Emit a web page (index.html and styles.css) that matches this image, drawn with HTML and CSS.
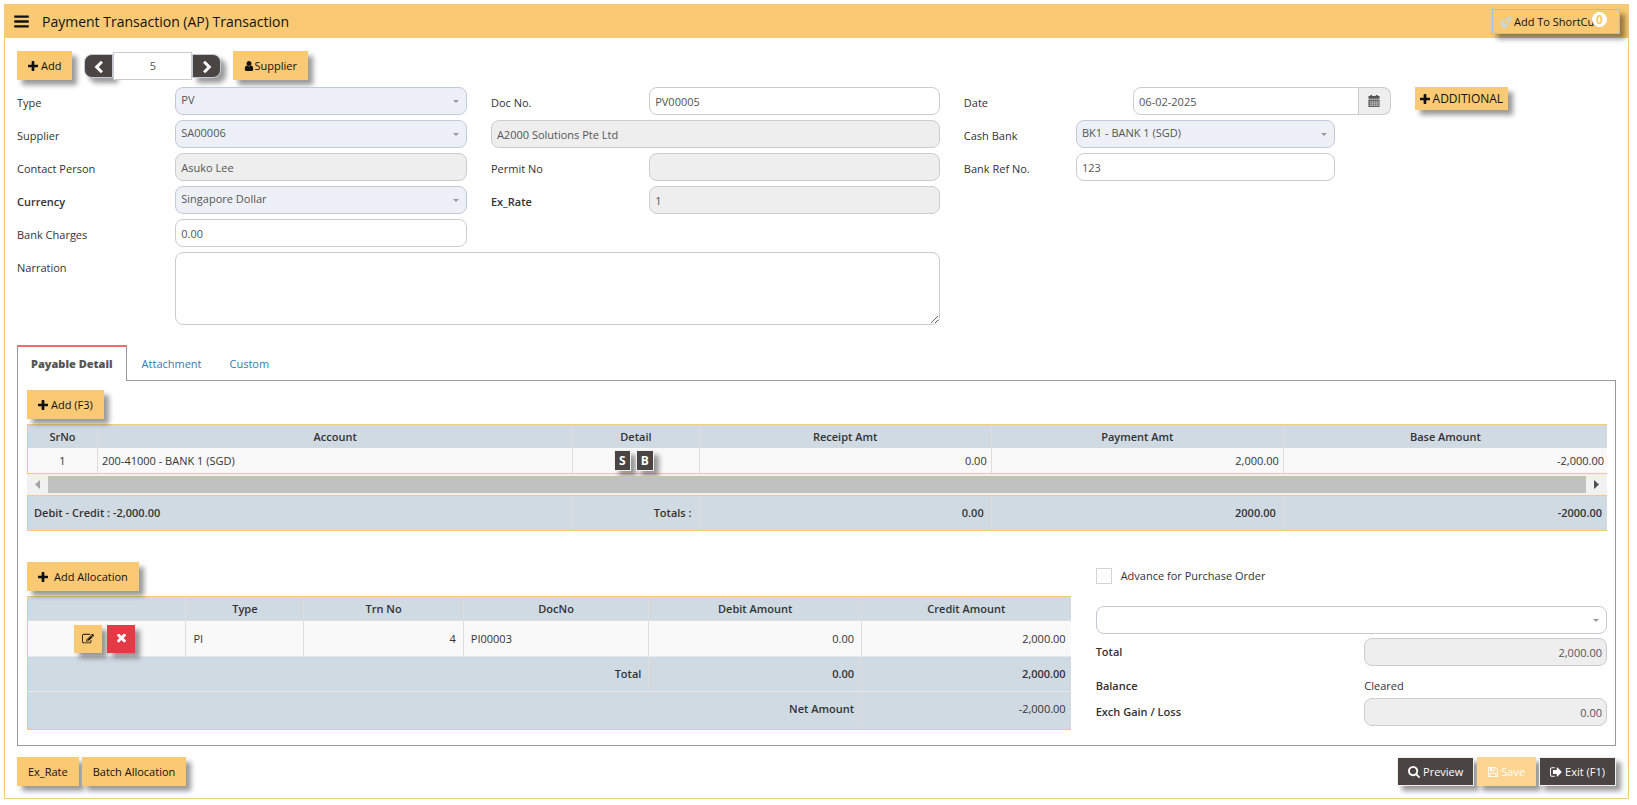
FILE: index.html
```html
<!DOCTYPE html>
<html lang="en">
<head>
  <meta charset="UTF-8">
  <title>Payment Transaction (AP) Transaction</title>
  <link rel="stylesheet" href="styles.css">
</head>
<body>

  <svg class="icon-defs" aria-hidden="true">
    <symbol id="i-bars" viewBox="0 0 1792 1792"><path d="M1664 1344v128q0 26-19 45t-45 19h-1408q-26 0-45-19t-19-45v-128q0-26 19-45t45-19h1408q26 0 45 19t19 45zm0-512v128q0 26-19 45t-45 19h-1408q-26 0-45-19t-19-45v-128q0-26 19-45t45-19h1408q26 0 45 19t19 45zm0-512v128q0 26-19 45t-45 19h-1408q-26 0-45-19t-19-45v-128q0-26 19-45t45-19h1408q26 0 45 19t19 45z"/></symbol>
    <symbol id="i-plus" viewBox="192 128 1408 1408"><path d="M1600 736v192q0 40-28 68t-68 28h-416v416q0 40-28 68t-68 28h-192q-40 0-68-28t-28-68v-416h-416q-40 0-68-28t-28-68v-192q0-40 28-68t68-28h416v-416q0-40 28-68t68-28h192q40 0 68 28t28 68v416h416q40 0 68 28t28 68z"/></symbol>
    <symbol id="i-user" viewBox="256 128 1280 1536"><path d="M1536 1399q0 109-62.5 187t-150.5 78h-854q-88 0-150.5-78t-62.5-187q0-85 8.5-160.5t31.5-152 58.5-131 94-89 134.5-34.5q131 128 313 128t313-128q76 0 134.5 34.5t94 89 58.5 131 31.5 152 8.5 160.5zm-256-887q0 159-112.5 271.5t-271.5 112.5-271.5-112.5-112.5-271.5 112.5-271.5 271.5-112.5 271.5 112.5 112.5 271.5z"/></symbol>
    <symbol id="i-rocket" viewBox="0 0 24 24"><path d="M22 2c-6 0-10 2.500-13 7H5l-3.500 5H7l3 3v5.500l5-3.500v-4c4.500-3 7-7 7-13zM6 16.500c-2 1-3 3-3 5.500 2.500 0 4.500-1 5.500-3z" fill="none" stroke="currentColor" stroke-width="2.400"/><circle cx="16" cy="8" r="2"/></symbol>
    <symbol id="i-edit" viewBox="0 128 1792 1536"><path d="M888 1184l116-116-152-152-116 116v56h96v96h56zm440-720q-16-16-33 1l-350 350q-17 17-1 33t33-1l350-350q17-17 1-33zm80 594v190q0 119-84.5 203.5t-203.5 84.5h-832q-119 0-203.5-84.5t-84.5-203.5v-832q0-119 84.5-203.5t203.5-84.5h832q63 0 117 25 15 7 18 23 3 17-9 29l-49 49q-14 14-32 8-23-6-45-6h-832q-66 0-113 47t-47 113v832q0 66 47 113t113 47h832q66 0 113-47t47-113v-126q0-13 9-22l64-64q15-15 35-7t20 29zm-96-738l288 288-672 672h-288v-288zm444 132l-92 92-288-288 92-92q28-28 68-28t68 28l152 152q28 28 28 68t-28 68z"/></symbol>
    <symbol id="i-times" viewBox="302 434 1188 1188"><path d="M1490 1322q0 40-28 68l-136 136q-28 28-68 28t-68-28l-294-294-294 294q-28 28-68 28t-68-28l-136-136q-28-28-28-68t28-68l294-294-294-294q-28-28-28-68t28-68l136-136q28-28 68-28t68 28l294 294 294-294q28-28 68-28t68 28l136 136q28 28 28 68t-28 68l-294 294 294 294q28 28 28 68z"/></symbol>
    <symbol id="i-search" viewBox="64 128 1664 1664"><path d="M1216 832q0-185-131.5-316.5t-316.5-131.5-316.5 131.5-131.5 316.5 131.5 316.5 316.5 131.5 316.5-131.5 131.5-316.5zm512 832q0 52-38 90t-90 38q-54 0-90-38l-343-342q-179 124-399 124-143 0-273.5-55.5t-225-150-150-225-55.5-273.5 55.5-273.5 150-225 225-150 273.5-55.5 273.5 55.5 225 150 150 225 55.5 273.5q0 220-124 399l343 343q37 37 37 90z"/></symbol>
    <symbol id="i-save" viewBox="128 128 1536 1536"><path d="M512 1536h768v-384h-768v384zm896 0h128v-896q0-14-10-38.5t-20-34.5l-281-281q-10-10-34-20t-39-10v416q0 40-28 68t-68 28h-576q-40 0-68-28t-28-68v-416h-128v1280h128v-416q0-40 28-68t68-28h832q40 0 68 28t28 68v416zm-384-928v-320q0-13-9.5-22.5t-22.5-9.5h-192q-13 0-22.5 9.5t-9.5 22.5v320q0 13 9.5 22.5t22.5 9.5h192q13 0 22.5-9.5t9.5-22.5zm640 32v928q0 40-28 68t-68 28h-1344q-40 0-68-28t-28-68v-1344q0-40 28-68t68-28h928q40 0 88 20t76 48l280 280q28 28 48 76t20 88z"/></symbol>
    <symbol id="i-exit" viewBox="64 128 1600 1536"><path d="M704 1440q0 4 1 20t.5 26.5-3 23.5-10 19.5-20.5 6.5h-320q-119 0-203.5-84.5t-84.5-203.5v-704q0-119 84.5-203.5t203.5-84.5h320q13 0 22.5 9.5t9.5 22.5q0 4 1 20t.5 26.5-3 23.5-10 19.5-20.5 6.5h-320q-66 0-113 47t-47 113v704q0 66 47 113t113 47h312l11.5 1 11.5 3 8 5.5 7 9 2 13.5zm928-544q0 26-19 45l-544 544q-19 19-45 19t-45-19-19-45v-288h-448q-26 0-45-19t-19-45v-384q0-26 19-45t45-19h448v-288q0-26 19-45t45-19 45 19l544 544q19 19 19 45z"/></symbol>
    <symbol id="i-left" viewBox="0 0 12 12"><path d="M8.500 1.500L4 6l4.500 4.500" fill="none" stroke="currentColor" stroke-width="2.600"/></symbol>
    <symbol id="i-right" viewBox="0 0 12 12"><path d="M3.500 1.500L8 6l-4.500 4.500" fill="none" stroke="currentColor" stroke-width="2.600"/></symbol>
    <symbol id="i-calendar" viewBox="0 0 12 13"><path d="M0 1h2V0h2v1h4V0h2v1h2v3H0zM0 5h12v8H0z"/><path d="M1 7.500h10M1 9.500h10M1 11.500h10M2.500 6v6M4.500 6v6M6.500 6v6M8.500 6v6M10.500 6v6" stroke="#eee" stroke-width=".5"/></symbol>
  </svg>

  <div class="panel">
    <header class="titlebar">
      <button type="button" class="menu-btn" aria-label="Menu"><svg class="icon-menu"><use href="#i-bars"/></svg></button>
      <h1>Payment Transaction (AP) Transaction</h1>
      <button type="button" class="btn shortcut"><svg class="icon"><use href="#i-rocket"/></svg> Add To ShortCut<span class="badge">0</span></button>
    </header>

    <div class="content">
      <div class="toolbar">
        <button type="button" class="btn"><svg class="icon-sm"><use href="#i-plus"/></svg> Add</button>
        <div class="pager">
          <button type="button" class="prev" aria-label="Previous"><svg class="icon-nav"><use href="#i-left"/></svg></button>
          <input type="text" value="5" aria-label="Record number">
          <button type="button" class="next" aria-label="Next"><svg class="icon-nav"><use href="#i-right"/></svg></button>
        </div>
        <button type="button" class="btn tight"><svg class="icon-sm"><use href="#i-user"/></svg>Supplier</button>
      </div>

      <form class="form">
        <label class="c1" for="type">Type</label>
        <div class="select c2"><select id="type"><option>PV</option></select></div>
        <label class="c3" for="docno">Doc No.</label>
        <input class="field c4" type="text" id="docno" value="PV00005">
        <label class="c5" for="date">Date</label>
        <div class="date-group">
          <input class="field" type="text" id="date" value="06-02-2025">
          <button type="button" aria-label="Pick date"><svg class="icon"><use href="#i-calendar"/></svg></button>
        </div>
        <button type="button" class="btn additional"><svg class="icon-sm"><use href="#i-plus"/></svg> ADDITIONAL</button>

        <label class="c1" for="supplier">Supplier</label>
        <div class="select c2"><select id="supplier"><option>SA00006</option></select></div>
        <input class="field c34" type="text" value="A2000 Solutions Pte Ltd" aria-label="Supplier name" readonly>
        <label class="c5" for="bank">Cash Bank</label>
        <div class="select c67"><select id="bank"><option>BK1 - BANK 1 (SGD)</option></select></div>

        <label class="c1" for="contact">Contact Person</label>
        <input class="field c2" type="text" id="contact" value="Asuko Lee" readonly>
        <label class="c3" for="permit">Permit No</label>
        <input class="field c4" type="text" id="permit" readonly>
        <label class="c5" for="bankref">Bank Ref No.</label>
        <input class="field c67" type="text" id="bankref" value="123">

        <label class="c1 bold" for="currency">Currency</label>
        <div class="select c2"><select id="currency"><option>Singapore Dollar</option></select></div>
        <label class="c3 bold" for="exrate">Ex_Rate</label>
        <input class="field c4" type="text" id="exrate" value="1" readonly>

        <label class="c1" for="charges">Bank Charges</label>
        <input class="field c2" type="text" id="charges" value="0.00">

        <label class="c1" for="narration">Narration</label>
        <textarea class="field narration" id="narration"></textarea>
      </form>

      <nav class="tabs">
        <a class="active" href="#payable">Payable Detail</a>
        <a href="#attachment">Attachment</a>
        <a href="#custom">Custom</a>
      </nav>

      <section class="tab-box" id="payable">
        <button type="button" class="btn"><svg class="icon-sm"><use href="#i-plus"/></svg> Add (F3)</button>

        <table class="grid detail">
          <colgroup><col class="w-sr"><col class="w-account"><col class="w-detail"><col class="w-amt"><col class="w-amt"><col></colgroup>
          <thead>
            <tr><th>SrNo</th><th>Account</th><th>Detail</th><th>Receipt Amt</th><th>Payment Amt</th><th>Base Amount</th></tr>
          </thead>
          <tbody>
            <tr>
              <td class="center">1</td>
              <td>200-41000 - BANK 1 (SGD)</td>
              <td>
                <div class="tags"><button type="button" class="tag">S</button><button type="button" class="tag">B</button></div>
              </td>
              <td class="num">0.00</td>
              <td class="num">2,000.00</td>
              <td class="num">-2,000.00</td>
            </tr>
          </tbody>
        </table>
        <div class="scrollbar">
          <svg class="arrow off" viewBox="0 0 5 9"><path d="M5 0v9L0 4.500z"/></svg>
          <div class="thumb"></div>
          <svg class="arrow" viewBox="0 0 5 9"><path d="M0 0v9l5-4.500z"/></svg>
        </div>
        <table class="grid totals">
          <colgroup><col class="w-sr"><col class="w-account"><col class="w-detail"><col class="w-amt"><col class="w-amt"><col></colgroup>
          <tbody>
            <tr>
              <td colspan="2">Debit - Credit : -2,000.00</td>
              <td class="num">Totals :</td>
              <td class="num">0.00</td>
              <td class="num">2000.00</td>
              <td class="num">-2000.00</td>
            </tr>
          </tbody>
        </table>

        <div class="lower">
          <div class="allocation">
            <button type="button" class="btn wide"><svg class="icon-sm"><use href="#i-plus"/></svg> Add Allocation</button>
            <table class="grid alloc">
              <colgroup><col class="w-act"><col class="w-type"><col class="w-trn"><col class="w-doc"><col class="w-debit"><col></colgroup>
              <thead>
                <tr><th></th><th>Type</th><th>Trn No</th><th>DocNo</th><th>Debit Amount</th><th>Credit Amount</th></tr>
              </thead>
              <tbody>
                <tr>
                  <td>
                    <div class="actions">
                      <button type="button" class="btn square" aria-label="Edit"><svg class="icon"><use href="#i-edit"/></svg></button>
                      <button type="button" class="btn square red" aria-label="Delete"><svg class="icon-x"><use href="#i-times"/></svg></button>
                    </div>
                  </td>
                  <td>PI</td>
                  <td class="num">4</td>
                  <td>PI00003</td>
                  <td class="num">0.00</td>
                  <td class="num">2,000.00</td>
                </tr>
              </tbody>
              <tfoot>
                <tr><td colspan="4" class="num">Total</td><td class="num">0.00</td><td class="num">2,000.00</td></tr>
                <tr><td colspan="5" class="num">Net Amount</td><td class="num plain">-2,000.00</td></tr>
              </tfoot>
            </table>
          </div>

          <div class="summary">
            <label class="check"><input type="checkbox"> Advance for Purchase Order</label>
            <div class="select empty"><select aria-label="Purchase order"><option></option></select></div>
            <div class="pair">
              <label class="bold" for="total">Total</label>
              <input class="field num" type="text" id="total" value="2,000.00" readonly>
            </div>
            <div class="pair balance">
              <span class="bold">Balance</span>
              <span>Cleared</span>
            </div>
            <div class="pair">
              <label class="bold" for="exch">Exch Gain / Loss</label>
              <input class="field num" type="text" id="exch" value="0.00" readonly>
            </div>
          </div>
        </div>
      </section>

      <footer class="footer">
        <button type="button" class="btn">Ex_Rate</button>
        <button type="button" class="btn">Batch Allocation</button>
        <span class="spacer"></span>
        <button type="button" class="btn dark"><svg class="icon"><use href="#i-search"/></svg> Preview</button>
        <button type="button" class="btn save" disabled><svg class="icon-sm"><use href="#i-save"/></svg> Save</button>
        <button type="button" class="btn dark"><svg class="icon"><use href="#i-exit"/></svg> Exit (F1)</button>
      </footer>
    </div>
  </div>

</body>
</html>
```

FILE: styles.css
```css
* {
  box-sizing: border-box;
}

body {
  margin: 4px 8px 4px 4px;
  background: #fff;
  color: #333;
  font-family: "Open Sans", "Noto Sans", sans-serif;
  font-size: 11px;
  line-height: 16px;
}

button, input, select, textarea {
  font: inherit;
  color: inherit;
  margin: 0;
}

.icon-defs {
  display: none;
}

svg {
  fill: currentColor;
  flex: none;
}

.icon {
  width: 12px;
  height: 12px;
}

.icon-sm {
  width: 10px;
  height: 10px;
}

.icon-x {
  width: 9px;
  height: 9px;
}

.icon-nav {
  width: 14px;
  height: 14px;
}

.bold {
  font-weight: 600;
}

.panel {
  border: 1px solid #f9c973;
}

/* title bar */
.titlebar {
  display: flex;
  align-items: center;
  height: 33px;
  padding: 0 8px;
  background: #f9c973;
  color: #111;
}

.menu-btn {
  display: flex;
  border: 0;
  padding: 0;
  background: none;
}

.icon-menu {
  width: 17px;
  height: 17px;
}

h1 {
  flex: 1;
  margin: 0 0 0 12px;
  font-size: 14px;
  font-weight: 400;
}

/* buttons */
.btn {
  display: inline-flex;
  align-items: center;
  justify-content: center;
  gap: 3px;
  height: 29px;
  padding: 0 11px;
  border: 0;
  background: #f9c973;
  color: #111;
  white-space: nowrap;
  box-shadow: 5px 5px 5px rgba(0, 0, 0, 0.4);
}

.btn.tight {
  gap: 0;
}

.btn.wide {
  gap: 6px;
}

.btn.dark {
  padding: 0 10px;
  border: 1px solid #eee;
  background: #4a4443;
  color: #fff;
}

.btn.save {
  background: #fbd591;
  color: #fff;
}

.btn.square {
  width: 28px;
  height: 28px;
  padding: 0;
}

.btn.red {
  background: #e43a45;
  color: #fff;
}

.btn.shortcut {
  position: relative;
  gap: 2px;
  height: 25px;
  width: 128px;
  padding: 0 7px;
  justify-content: flex-start;
  border: 1px solid #94c5ea;
}

.shortcut .icon {
  color: #bcd9ee;
}

.badge {
  position: absolute;
  top: 2px;
  right: 12px;
  width: 15px;
  height: 15px;
  border-radius: 50%;
  background: #fff;
  color: #f9c973;
  font-size: 12px;
  font-weight: 700;
  line-height: 15px;
  text-align: center;
}

.content {
  padding: 13px 12px 12px;
}

.toolbar {
  display: flex;
  align-items: center;
  gap: 12px;
}

.pager {
  display: flex;
  align-items: center;
}

.pager button {
  display: flex;
  align-items: center;
  justify-content: center;
  width: 29px;
  height: 24px;
  padding: 3px 0 0;
  border: 1px solid #c2cad8;
  background: #4a4443;
  color: #fff;
  box-shadow: 5px 5px 5px rgba(0, 0, 0, 0.4);
}

.pager .prev {
  border-radius: 8px 0 0 8px;
}

.pager .next {
  border-radius: 0 8px 8px 0;
}

.pager input {
  position: relative;
  width: 79px;
  height: 28px;
  border: 1px solid #ccc;
  background: #fff;
  color: #555;
  text-align: center;
}

/* entry form */
.form {
  display: grid;
  grid-template-columns: 134fr 291fr 134fr 290fr 88fr 33fr 201fr 32fr 201fr;
  grid-auto-rows: minmax(28px, auto);
  gap: 5px 24px;
  margin-top: 7px;
}

.form label {
  padding-top: 8px;
  white-space: nowrap;
}

.c1 { grid-column: 1; }
.c2 { grid-column: 2; }
.c3 { grid-column: 3; }
.c4 { grid-column: 4; }
.c34 { grid-column: 3 / 5; }
.c5 { grid-column: 5; }
.c67 { grid-column: 6 / 8; }

.field {
  width: 100%;
  min-width: 0;
  height: 28px;
  padding: 2px 5px;
  border: 1px solid #ccc;
  border-radius: 8px;
  background: #fff;
  color: #555;
}

.field[readonly] {
  background: #eee;
}

.select {
  position: relative;
}

.select select {
  display: block;
  appearance: none;
  width: 100%;
  height: 28px;
  padding: 0 20px 2px 5px;
  border: 1px solid #c2cad8;
  border-radius: 8px;
  background: #edf1f7;
  color: #555;
}

.select.empty select {
  background: #fff;
}

.select::after {
  content: "";
  position: absolute;
  right: 8px;
  top: 13px;
  border: 3px solid transparent;
  border-top-color: #999;
  border-bottom: 0;
}

.date-group {
  display: flex;
  grid-column: 7 / 9;
}

.date-group .field {
  flex: 1;
  border-radius: 8px 0 0 8px;
}

.date-group button {
  display: flex;
  align-items: center;
  justify-content: center;
  width: 32px;
  height: 28px;
  border: 1px solid #ccc;
  border-left: 0;
  border-radius: 0 8px 8px 0;
  background: #eee;
  color: #555;
}

.btn.additional {
  grid-column: 9;
  justify-self: start;
  height: 23px;
  padding: 0 5px;
  font-size: 12px;
}

.narration {
  grid-column: 2 / 5;
  height: 73px;
  display: block;
}

/* tabs */
.tabs {
  display: flex;
  margin-top: 20px;
}

.tabs a {
  height: 35px;
  padding: 9px 14px;
  border-top: 2px solid transparent;
  color: #337ab7;
  text-decoration: none;
}

.tabs a.active {
  position: relative;
  height: 36px;
  margin-bottom: -1px;
  margin-right: 1px;
  padding: 9px 13px;
  border: 1px solid #999;
  border-top: 2px solid #f36a6f;
  border-bottom: 0;
  background: #fff;
  color: #555;
  font-weight: 800;
}

.tab-box {
  padding: 9px 8px 15px 9px;
  border: 1px solid #999;
}

/* tables */
.grid {
  width: 100%;
  table-layout: fixed;
  border-collapse: separate;
  border-spacing: 0;
  border: 1px solid #f9c973;
  border-right: 0;
  background: #d0dae3;
}

.grid th, .grid td {
  padding: 0 4px;
  border-right: 1px solid #ddd;
}

.grid th:last-child, .grid td:last-child {
  border-right: 0;
}

.grid th {
  height: 23px;
  font-weight: 600;
}

.grid tbody td {
  background: #f9f9f9;
}

.num {
  text-align: right;
}

.grid .center {
  text-align: center;
}

.detail {
  margin-top: 5px;
}

.detail tbody td {
  height: 25px;
}

.detail td:last-child {
  padding-right: 3px;
}

.w-sr { width: 70px; }
.w-account { width: 30.1%; }
.w-detail { width: 8%; }
.w-amt { width: 18.5%; }

.tags {
  display: flex;
  justify-content: center;
  gap: 5px;
  padding-right: 4px;
}

.tag {
  min-width: 16px;
  height: 21px;
  padding: 0 4px;
  border: 1px solid #eee;
  background: #4a4443;
  color: #fff;
  font-size: 12px;
  font-weight: 700;
  line-height: 16px;
  box-shadow: 5px 5px 5px rgba(0, 0, 0, 0.4);
}

.scrollbar {
  display: flex;
  align-items: center;
  gap: 8px;
  padding: 2px 8px;
  background: #f1f1f1;
}

.thumb {
  flex: 1;
  height: 17px;
  background: #c1c1c1;
}

.arrow {
  width: 5px;
  height: 9px;
  fill: #505050;
}

.arrow.off {
  fill: #a3a3a3;
}

.totals tbody td {
  height: 34px;
  padding: 0 7px 0 6px;
  background: #d0dae3;
  font-weight: 600;
}

.totals td:last-child {
  padding-right: 5px;
}

.lower {
  display: grid;
  grid-template-columns: 1043fr 511fr;
  gap: 25px;
  margin-top: 31px;
}

.alloc {
  margin-top: 5px;
}

.alloc th {
  height: 24px;
  border-bottom: 1px solid #ddd;
}

.alloc tbody td {
  height: 36px;
  padding: 0 7px;
  border-bottom: 1px solid #e4e8ec;
}

.alloc tfoot td {
  height: 35px;
  padding: 0 7px;
  font-weight: 600;
  border-bottom: 1px solid #e4e8ec;
}

.alloc tfoot tr:last-child td {
  height: 37px;
  padding-bottom: 4px;
  border-bottom: 0;
}

.alloc td:last-child {
  padding-right: 5px;
}

.alloc tfoot .plain {
  font-weight: 400;
}

.w-act { width: 15.2%; }
.w-type { width: 11.3%; }
.w-trn { width: 15.3%; }
.w-doc { width: 17.8%; }
.w-debit { width: 20.4%; }

.actions {
  display: flex;
  justify-content: center;
  gap: 5px;
  padding-right: 4px;
}

.summary {
  display: flex;
  flex-direction: column;
  gap: 4px;
  padding-top: 6px;
}

.check {
  display: flex;
  align-items: center;
  gap: 9px;
  margin-bottom: 18px;
}

.check input {
  appearance: none;
  width: 16px;
  height: 16px;
  border: 1px solid #d5d5d5;
  background: #fff;
}

.pair {
  display: grid;
  grid-template-columns: 268fr 242fr;
  align-items: center;
  min-height: 28px;
}

.pair .num {
  padding-right: 4px;
}

.pair.balance {
  align-items: end;
  min-height: 24px;
}

.footer {
  display: flex;
  gap: 3px;
  margin-top: 11px;
}

.spacer {
  flex: 1;
}
```
